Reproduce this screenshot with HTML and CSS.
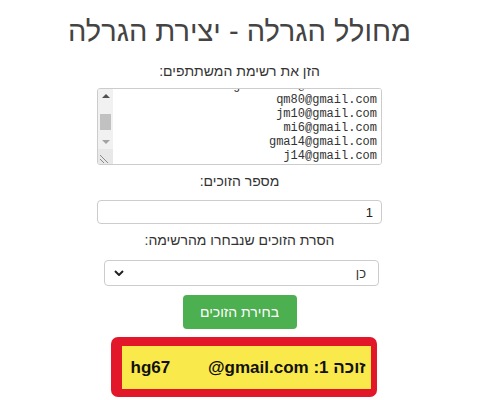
FILE: index.html
```html
<!DOCTYPE html>
<html lang="he" dir="rtl">
<head>
    <meta charset="UTF-8">
    <meta name="viewport" content="width=device-width, initial-scale=1.0">
    <title>מחולל הגרלה</title>
    <link rel="stylesheet" href="styles.css">
</head>
<body>
    <div class="raffle">
        <h1 class="raffle-title">מחולל הגרלה - יצירת הגרלה</h1>

        <label class="field-label label-first" for="participants">הזן את רשימת המשתתפים:</label>
        <div class="list-box">
            <textarea id="participants" class="participants">lior2233@gmail.com
dana77@gmail.com
yossi.k@gmail.com
0599122211@gmail.com
qm80@gmail.com
jm10@gmail.com
mi6@gmail.com
gma14@gmail.com
j14@gmail.com
hg67@gmail.com
noa.s@gmail.com
amit21@gmail.com
tal55@gmail.com</textarea>
            <!-- פס גלילה בצד שמאל -->
            <div class="scrollbar">
                <span class="arrow arrow-up"></span>
                <div class="track"><span class="thumb"></span></div>
                <span class="arrow arrow-down"></span>
                <svg class="resizer" width="15" height="15" viewBox="0 0 15 15">
                    <path d="M2 6l8 8M2 10l4 4" stroke="#8a8a8a" stroke-width="1"/>
                </svg>
            </div>
        </div>

        <label class="field-label" for="winners-count">מספר הזוכים:</label>
        <input id="winners-count" class="text-field" type="number" value="1">

        <label class="field-label" for="remove-winners">הסרת הזוכים שנבחרו מהרשימה:</label>
        <select id="remove-winners" class="select-field">
            <option>כן</option>
            <option>לא</option>
        </select>

        <button class="draw-btn" type="button">בחירת הזוכים</button>

        <div class="winners">
            <p class="winner">זוכה 1: hg67&nbsp;&nbsp;&nbsp;&nbsp;&nbsp;&nbsp;&nbsp;&nbsp;@gmail.com</p>
        </div>
    </div>

    <script>
        // גלילת הרשימה לאמצע
        window.onload = () => {
            document.getElementById('participants').scrollTop = 54;
        }
    </script>
</body>
</html>
```

FILE: styles.css
```css
/* עיצוב כללי */
body {
    margin: 0;
    background: #fff;
    color: #333;
    font-family: "Liberation Sans", Arial, sans-serif;
}

.raffle {
    width: 285px;
    margin: 0 auto;
    display: flex;
    flex-direction: column;
    align-items: center;
}

.raffle-title {
    margin: 12px 0 0;
    font-size: 29px;
    line-height: 38px;
    font-weight: normal;
    color: #444;
    white-space: nowrap;
}

/* כותרות השדות */
.field-label {
    display: block;
    font-size: 14px;
    line-height: 20px;
    color: #333;
    margin-top: 6px;
}

.label-first {
    margin-top: 11px;
}

/* רשימת המשתתפים */
.list-box {
    box-sizing: border-box;
    width: 285px;
    height: 77px;
    margin-top: 7px;
    display: flex;
    border: 1px solid #ccc;
    border-radius: 3px;
    overflow: hidden;
}

.participants {
    flex: 1;
    min-width: 0;
    margin: 0;
    padding: 2px 4px;
    border: 0;
    outline: none;
    resize: none;
    overflow: hidden;
    font-family: "Liberation Mono", monospace;
    font-size: 12px;
    line-height: 14px;
    color: #333;
}

.scrollbar {
    width: 15px;
    flex-shrink: 0;
    display: flex;
    flex-direction: column;
    align-items: center;
    background: #f1f1f1;
}

.arrow {
    width: 0;
    height: 0;
    margin: 5px 0;
    border-left: 4px solid transparent;
    border-right: 4px solid transparent;
}

.arrow-up {
    border-bottom: 4px solid #505050;
}

.arrow-down {
    border-top: 4px solid #a3a3a3;
}

.track {
    flex: 1;
    width: 100%;
    display: flex;
    align-items: center;
    justify-content: center;
}

.thumb {
    width: 11px;
    height: 16px;
    margin-top: 6px;
    background: #c1c1c1;
}

.resizer {
    display: block;
    background: #e8e8e8;
}

.text-field {
    box-sizing: border-box;
    width: 285px;
    height: 24px;
    margin-top: 9px;
    padding: 0 8px;
    border: 1px solid #ccc;
    border-radius: 4px;
    font-family: inherit;
    font-size: 13px;
    color: #222;
    -moz-appearance: textfield;
}

.text-field::-webkit-inner-spin-button {
    -webkit-appearance: none;
}

.select-field {
    box-sizing: border-box;
    width: 275px;
    height: 26px;
    margin: 10px 0 0 4px;
    padding: 0 12px;
    border: 1px solid #ccc;
    border-radius: 4px;
    background: #fff url("data:image/svg+xml,%3Csvg xmlns='http://www.w3.org/2000/svg' width='10' height='6' viewBox='0 0 10 6'%3E%3Cpath d='M1 1l4 4 4-4' fill='none' stroke='%23222' stroke-width='2'/%3E%3C/svg%3E") no-repeat 9px center;
    -webkit-appearance: none;
    appearance: none;
    font-family: inherit;
    font-size: 13px;
    color: #333;
}

.draw-btn {
    margin-top: 9px;
    width: 114px;
    height: 34px;
    border: 0;
    border-radius: 4px;
    background: #4caf50;
    color: #fff;
    font-family: inherit;
    font-size: 14px;
}

/* תוצאות ההגרלה */
.winners {
    box-sizing: border-box;
    width: 266px;
    height: 60px;
    margin: 8px 0 0 8px;
    border-style: solid;
    border-color: #e3172a;
    border-width: 9px 6px 8px 11px;
    border-radius: 7px;
    background: #fae94a;
    display: flex;
    align-items: center;
    padding: 0 5px;
}

.winner {
    margin: 0;
    font-size: 17px;
    font-weight: bold;
    color: #111;
    white-space: nowrap;
}
```
